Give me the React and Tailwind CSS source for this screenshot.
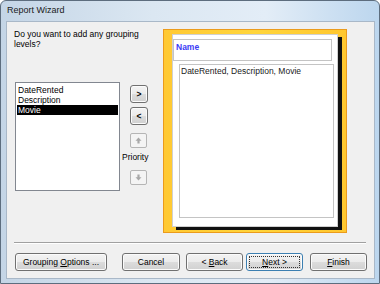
import React from 'react';

// small Vista-style push button
function Btn({ children, className = '', primary = false }) {
  return (
    <div
      className={`relative flex items-center justify-center h-[18px] rounded-[3px] border text-[8.5px] text-black shadow-[inset_0_0_0_1px_#fbfbfb] bg-[linear-gradient(#f3f3f3_0%,#ebebeb_50%,#dcdcdc_50%,#d0d0d0_100%)] ${primary ? 'border-[#3c7fb1]' : 'border-[#707070]'} ${className}`}
    >
      {primary && <div className="absolute inset-[2px] border border-dotted border-[#333] rounded-[1px]" />}
      <span className="relative">{children}</span>
    </div>
  );
}

function ArrowBtn({ up }) {
  return (
    <div className="ml-[8px] w-[17px] h-[15px] flex items-center justify-center rounded-[2px] border border-[#b5b5b5] bg-[#f4f4f4]">
      <svg width="7" height="7" viewBox="0 0 7 7" className={up ? '' : 'rotate-180'}>
        <path d="M3.5 0.5 L6.5 3.8 H4.6 V6.5 H2.4 V3.8 H0.5 Z" fill="#a8a8a8" />
      </svg>
    </div>
  );
}

export default function App() {
  const fields = ['DateRented', 'Description', 'Movie'];
  const selected = 'Movie';

  return (
    <div className="w-[380px] h-[284px] flex flex-col overflow-hidden rounded-t-[6px] border border-[#5d6d7e] bg-[linear-gradient(90deg,#c4d5e6_0%,#dbe7f2_40%,#e3edf7_70%,#bcd6ee_100%)] font-['Liberation_Sans',Arial,sans-serif]">
      {/* title bar */}
      <div className="h-[20px] flex items-center pl-[6px] text-[9px] text-[#1a1a1a]">Report Wizard</div>

      {/* client area */}
      <div className="flex-1 ml-[5px] mr-[4px] mb-[4px] flex flex-col border border-[#a9b8c8] bg-[#f0f0f0]">
        <div className="flex h-[212px]">
          {/* left side */}
          <div className="w-[156px] pl-[7px] pt-[7px] flex flex-col">
            <p className="text-[8.5px] leading-[10px] text-black w-[140px]">
              Do you want to add any grouping levels?
            </p>
            <div className="flex mt-[33px]">
              <div className="ml-[1px] w-[105px] h-[109px] border border-[#828790] bg-white pt-[2px] px-[1px]">
                {fields.map((f) => (
                  <div
                    key={f}
                    className={`h-[10px] leading-[10px] text-[8.5px] pl-[1px] ${f === selected ? 'bg-black text-white' : 'text-black'}`}
                  >
                    {f}
                  </div>
                ))}
              </div>
              <div className="ml-[2px] w-[28px] flex flex-col pt-[3px]">
                <Btn className="ml-[8px] w-[18px] h-[17px] font-bold">&gt;</Btn>
                <Btn className="ml-[8px] mt-[4px] w-[18px] h-[17px] font-bold">&lt;</Btn>
                <div className="mt-[8px]">
                  <ArrowBtn up />
                </div>
                <div className="mt-[3px] text-[8.5px] leading-[12px] text-black">Priority</div>
                <div className="mt-[7px]">
                  <ArrowBtn />
                </div>
              </div>
            </div>
          </div>

          {/* preview */}
          <div className="mt-[7px] w-[184px] h-[204px] border border-[#eb9b1c] bg-[linear-gradient(90deg,#ffc933_0%,#ffd53b_50%,#ffc72e_100%)] pl-[8px] pt-[4px]">
            <div className="w-[166px] h-[193px] bg-white border border-[#d0d0d0] shadow-[4px_3px_0_#111] flex flex-col">
              <div className="mt-[4px] ml-[0px] w-[159px] h-[22px] border border-[#c4c4c4] pl-[2px] pt-[2px] text-[8.5px] font-bold text-[#3c3cf5] leading-[10px]">
                Name
              </div>
              <div className="mt-[3px] ml-[6px] w-[155px] h-[154px] border border-[#c4c4c4] pl-[1px] pt-[1px] text-[8.5px] leading-[10px] text-[#1a1a1a]">
                DateRented, Description, Movie
              </div>
            </div>
          </div>
        </div>

        {/* separator */}
        <div className="mt-[8px] ml-[7px] mr-[8px] h-px bg-[#a0a0a0] shadow-[0_1px_0_#fff]" />

        {/* button row */}
        <div className="flex mt-[10px] pl-[8px]">
          <Btn className="w-[92px]">
            Grouping <span className="underline">O</span>ptions ...
          </Btn>
          <Btn className="ml-[15px] w-[58px]">Cancel</Btn>
          <Btn className="ml-[6px] w-[57px]">
            &lt; <span className="underline">B</span>ack
          </Btn>
          <Btn primary className="ml-[3px] w-[57px]">
            <span className="underline">N</span>ext &gt;
          </Btn>
          <Btn className="ml-[7px] w-[57px]">
            <span className="underline">F</span>inish
          </Btn>
        </div>
      </div>
    </div>
  );
}
